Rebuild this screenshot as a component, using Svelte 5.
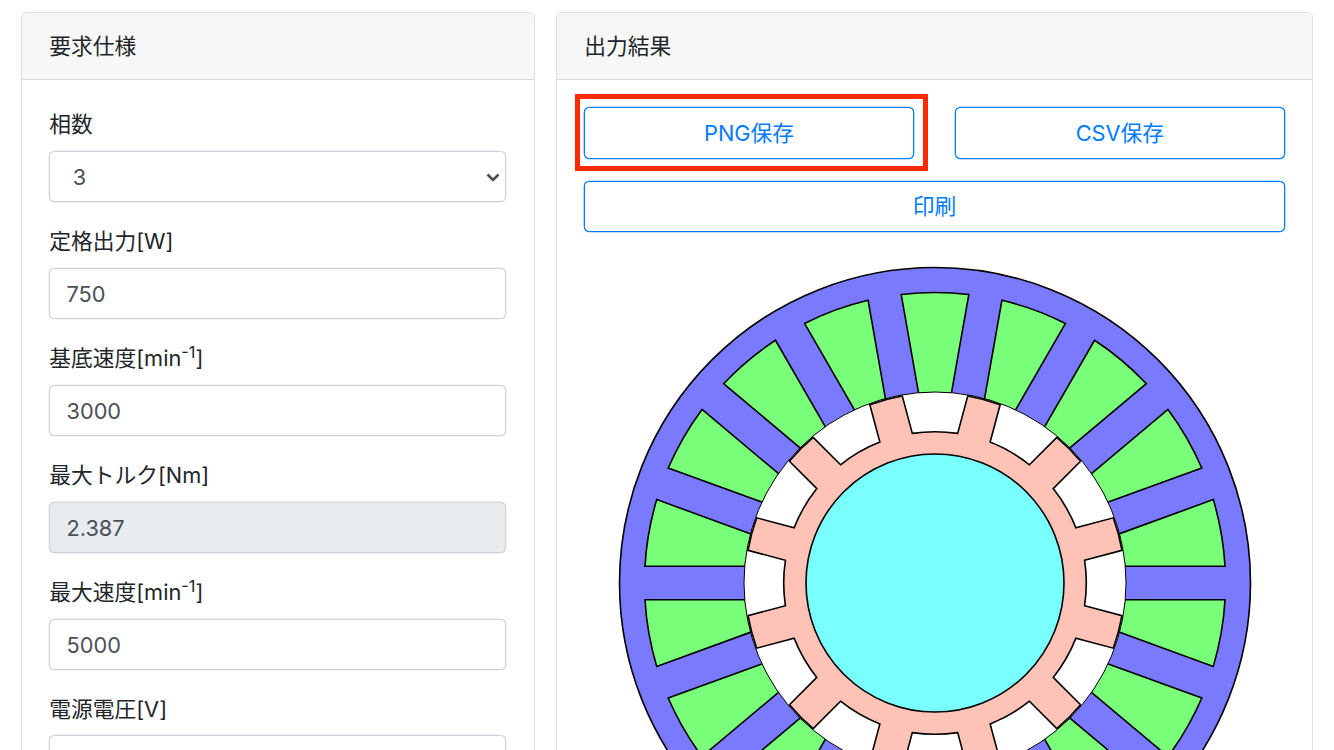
<script>
  const fields = [
    { label: '定格出力[W]', value: '750' },
    { label: '基底速度[min', sup: '-1', tail: ']', value: '3000' },
    { label: '最大トルク[Nm]', value: '2.387', disabled: true },
    { label: '最大速度[min', sup: '-1', tail: ']', value: '5000' },
    { label: '電源電圧[V]', value: '' }
  ];

  const cx = 351, cy = 329;
  const h = 16.8;
  const f = (n) => n.toFixed(2);

  function pt(phi, offset, r) {
    const a = (phi * Math.PI) / 180;
    const along = Math.sqrt(r * r - offset * offset);
    const x = along * Math.cos(a) - offset * Math.sin(a);
    const y = along * Math.sin(a) + offset * Math.cos(a);
    return `${f(cx + x)} ${f(cy - y)}`;
  }

  const slots = Array.from({ length: 18 }, (_, k) => {
    const t = 90 + k * 20;
    return `M${pt(t - 10, h, 190.5)} L${pt(t - 10, h, 290.5)} A290.5 290.5 0 0 0 ${pt(t + 10, -h, 290.5)} L${pt(t + 10, -h, 190.5)} Z`;
  });

  let rotor = '';
  for (let k = 0; k < 12; k++) {
    const p = 15 + k * 30;
    rotor += `${k === 0 ? 'M' : 'A151.3 151.3 0 0 0 '}${pt(p, -h, 151.3)} L${pt(p, -h, 189.8)} A189.8 189.8 0 0 0 ${pt(p, h, 189.8)} L${pt(p, h, 151.3)} `;
  }
  rotor += `A151.3 151.3 0 0 0 ${pt(15, -h, 151.3)} Z`;
</script>

<div class="page">
  <section class="card">
    <header class="card-header">要求仕様</header>
    <div class="card-body">
      <div class="group">
        <label for="phase">相数</label>
        <div class="select-wrap">
          <select id="phase" class="control select">
            <option>3</option>
          </select>
          <svg class="chevron" width="14" height="9" viewBox="0 0 14 9" aria-hidden="true">
            <path d="M1.500 1.500 L7 7 L12.500 1.500" />
          </svg>
        </div>
      </div>
      {#each fields as field, i}
        <div class="group">
          <label for={'field' + i}>{field.label}{#if field.sup}<sup>{field.sup}</sup>{field.tail}{/if}</label>
          <input id={'field' + i} class="control" value={field.value} disabled={field.disabled} />
        </div>
      {/each}
    </div>
  </section>

  <section class="card">
    <header class="card-header">出力結果</header>
    <div class="card-body">
      <div class="button-row">
        <div class="highlighted">
          <button class="btn">PNG保存</button>
          <span class="highlight"></span>
        </div>
        <button class="btn">CSV保存</button>
      </div>
      <button class="btn wide">印刷</button>
      <svg class="motor" width="700" height="680" viewBox="0 0 700 680" role="img" aria-label="モータ断面図">
        <circle cx={cx} cy={cy} r="315.5" class="stator" />
        {#each slots as d}
          <path {d} class="slot" />
        {/each}
        <circle cx={cx} cy={cy} r="191" class="bore" />
        <path d={rotor} class="rotor" />
        <circle cx={cx} cy={cy} r="129" class="shaft" />
      </svg>
    </div>
  </section>
</div>

<style>
  :global(html), :global(body) {
    margin: 0;
    height: 100%;
    overflow: hidden;
    background: #fff;
  }
  .page {
    display: grid;
    grid-template-columns: 513.6px 757px;
    gap: 21.4px;
    padding: 12px 0 0 21px;
    font-family: Inter, "Noto Sans CJK JP", sans-serif;
    font-size: 21.75px;
    line-height: 32.6px;
    color: #212529;
    align-items: start;
  }
  .card {
    border: 1.4px solid rgba(0, 0, 0, 0.125);
    border-radius: 5.4px;
    background: #fff;
    box-sizing: border-box;
    overflow: hidden;
  }
  .card-header {
    padding: 17.3px 27.2px 16.3px;
    background: #f7f7f7;
    border-bottom: 1.4px solid rgba(0, 0, 0, 0.125);
  }
  .card-body {
    padding: 27.2px;
  }
  .group {
    margin-bottom: 22.15px;
  }
  label {
    display: block;
    padding-top: 1px;
    margin-bottom: 9.9px;
  }
  sup {
    font-size: 16.3px;
    line-height: 0;
    position: relative;
    top: -0.5em;
    vertical-align: baseline;
  }
  .control {
    display: block;
    box-sizing: border-box;
    width: 100%;
    height: 51.3px;
    padding: 8px 16.3px 6px;
    border: 1.4px solid #ced4da;
    box-shadow: 0 0 0 0.3px #ced4da;
    border-radius: 5.4px;
    background: #fff;
    color: #495057;
    font: inherit;
    outline: none;
  }
  .control:disabled {
    background: #e9ecef;
    opacity: 1;
    color: #495057;
  }
  .select-wrap {
    position: relative;
  }
  .select {
    appearance: none;
    padding-left: 22.500px;
  }
  .chevron {
    position: absolute;
    right: 6px;
    top: 22px;
    fill: none;
    stroke: #495057;
    stroke-width: 2.6;
    pointer-events: none;
  }
  .button-row {
    display: grid;
    grid-template-columns: 1fr 1fr;
    gap: 41px;
    margin-bottom: 22.15px;
  }
  .highlighted {
    position: relative;
  }
  .highlight {
    position: absolute;
    left: -9px;
    right: -14px;
    top: -13px;
    bottom: -12px;
    border: 5px solid #ff2a00;
    pointer-events: none;
  }
  .btn {
    display: block;
    box-sizing: border-box;
    width: 100%;
    height: 51.3px;
    border: 1.4px solid #007bff;
    box-shadow: 0 0 0 0.3px #007bff;
    border-radius: 5.4px;
    background: #fff;
    color: #007bff;
    font: inherit;
    padding: 0;
  }
  .wide {
    margin-bottom: 22.15px;
  }
  .motor {
    display: block;
  }
  .stator {
    fill: #7a7aff;
    stroke: #000;
    stroke-width: 1.6;
  }
  .slot {
    fill: #7aff7a;
    stroke: #000;
    stroke-width: 1.6;
  }
  .bore {
    fill: #fff;
    stroke: #000;
    stroke-width: 1;
  }
  .rotor {
    fill: #ffc2b6;
    stroke: #000;
    stroke-width: 1.6;
  }
  .shaft {
    fill: #7affff;
    stroke: #000;
    stroke-width: 1.6;
  }
</style>
